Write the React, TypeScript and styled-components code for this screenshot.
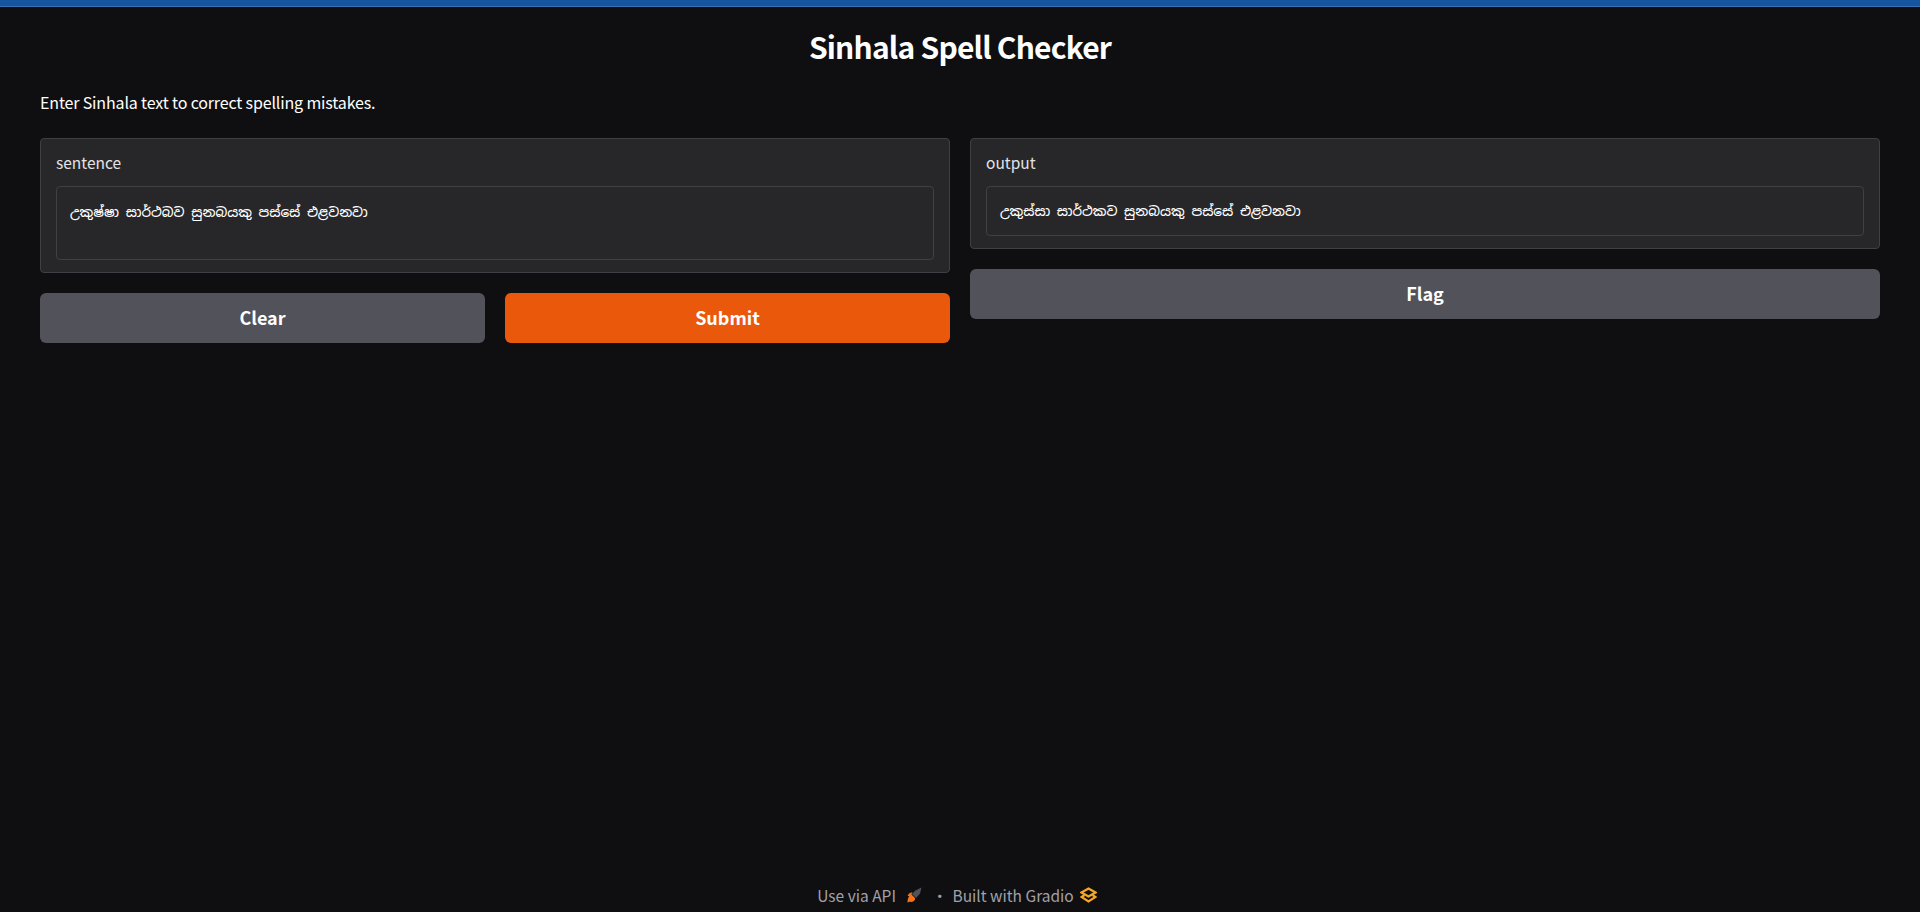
import React from "react";
import styled, { createGlobalStyle } from "styled-components";

const SANS = `"Noto Sans CJK SC", "Noto Sans", sans-serif`;

const Global = createGlobalStyle`
  html, body { margin: 0; padding: 0; background: #0f0f11; }
  * { box-sizing: border-box; }
`;

const Page = styled.div`
  height: 912px;
  display: flex;
  flex-direction: column;
  background: #0f0f11;
  color: #f4f4f5;
  font-family: ${SANS};
  overflow: hidden;
`;
const TopBar = styled.div`
  height: 7px;
  flex: none;
  background: #15559f;
  border-bottom: 1px solid #3a70b0;
`;
const Main = styled.main`
  flex: 1;
  display: flex;
  flex-direction: column;
  padding: 0 40px;
`;
const Title = styled.h1`
  margin: 17px 0 0;
  height: 44px;
  text-align: center;
  font-size: 30px;
  line-height: 44px;
  font-weight: 600;
  letter-spacing: -0.8px;
  color: #ffffff;
`;
const Description = styled.p`
  margin: 22px 0 0;
  height: 24px;
  font-size: 16px;
  line-height: 24px;
  letter-spacing: -0.15px;
  color: #ffffff;
`;
const Columns = styled.div`
  margin-top: 24px;
  display: grid;
  grid-template-columns: 1fr 1fr;
  gap: 20px;
  align-items: start;
`;
const Column = styled.div`
  display: flex;
  flex-direction: column;
  gap: 20px;
`;
const Panel = styled.div`
  background: #27272a;
  border: 1px solid #3f3f46;
  border-radius: 4px;
  padding: 13px 15px 12px;
`;
const Label = styled.div`
  height: 20px;
  font-size: 15.500px;
  line-height: 20px;
  color: #e4e4e7;
  margin-bottom: 14px;
`;
const Field = styled.div<{ $h: number; $top: number }>`
  height: ${(p) => p.$h}px;
  background: #27272a;
  border: 1px solid #3f3f46;
  border-radius: 4px;
  padding: ${(p) => p.$top}px 13px 0;
  font-family: "Noto Sans Sinhala", "Noto Sans", "DejaVu Sans", sans-serif;
  font-size: 13.400px;
  font-weight: 500;
  line-height: 21px;
  color: #ffffff;
`;
const Buttons = styled.div`
  display: grid;
  grid-template-columns: 1fr 1fr;
  gap: 20px;
`;
const Button = styled.button<{ $primary?: boolean }>`
  height: 50px;
  border: none;
  border-radius: 6px;
  padding: 0 0 2px;
  background: ${(p) => (p.$primary ? "#ea580c" : "#52525b")};
  color: #ffffff;
  font-family: ${SANS};
  font-size: 18px;
  font-weight: 600;
`;
const Footer = styled.footer`
  flex: none;
  height: 32px;
  padding: 0 6px 2px 0;
  display: flex;
  align-items: center;
  justify-content: center;
  font-size: 15.500px;
  color: #a1a1aa;
`;
const FooterLink = styled.span<{ $gap: number }>`
  display: inline-flex;
  align-items: center;
  gap: ${(p) => p.$gap}px;
`;
const Dot = styled.span`
  margin: 0 5px 0 10px;
`;

function Rocket() {
  return (
    <svg width="16" height="16" viewBox="0 0 16 16" aria-hidden="true">
      <path d="M9.500 3.500 15.500.5 14 6.500 10 11 6 7z" fill="#52525b" />
      <path d="M6.500 5 3 6.500 1.500 9 4.500 9z" fill="#f97316" />
      <path d="M5 7 9 11c.5 2-1 3.500-3.500 4-1.500-.3-2.500-.2-4 .5C1.500 12 2.500 9 5 7z" fill="#f97316" />
    </svg>
  );
}

function GradioLogo() {
  return (
    <svg width="17" height="16" viewBox="0 0 17 16" fill="none" stroke="#f5a623" strokeWidth="2.200" aria-hidden="true">
      <path d="M8.500 1.500 15.500 5.500 8.500 9.500 1.500 5.500z" />
      <path d="M4.500 8 1.500 10 8.500 14.500 15.500 10 12.500 8" />
    </svg>
  );
}

export default function App() {
  return (
    <Page>
      <Global />
      <TopBar />
      <Main>
        <Title>Sinhala Spell Checker</Title>
        <Description>Enter Sinhala text to correct spelling mistakes.</Description>
        <Columns>
          <Column>
            <Panel>
              <Label>sentence</Label>
              <Field $h={74} $top={15}>උකුෂ්ෂා සාර්ථබව සුනබයකු පස්සේ එළවනවා</Field>
            </Panel>
            <Buttons>
              <Button>Clear</Button>
              <Button $primary>Submit</Button>
            </Buttons>
          </Column>
          <Column>
            <Panel>
              <Label>output</Label>
              <Field $h={50} $top={14}>උකුස්සා සාර්ථකව සුනබයකු පස්සේ එළවනවා</Field>
            </Panel>
            <Button>Flag</Button>
          </Column>
        </Columns>
      </Main>
      <Footer>
        <FooterLink $gap={10}>Use via API <Rocket /></FooterLink>
        <Dot>·</Dot>
        <FooterLink $gap={6}>Built with Gradio <GradioLogo /></FooterLink>
      </Footer>
    </Page>
  );
}
